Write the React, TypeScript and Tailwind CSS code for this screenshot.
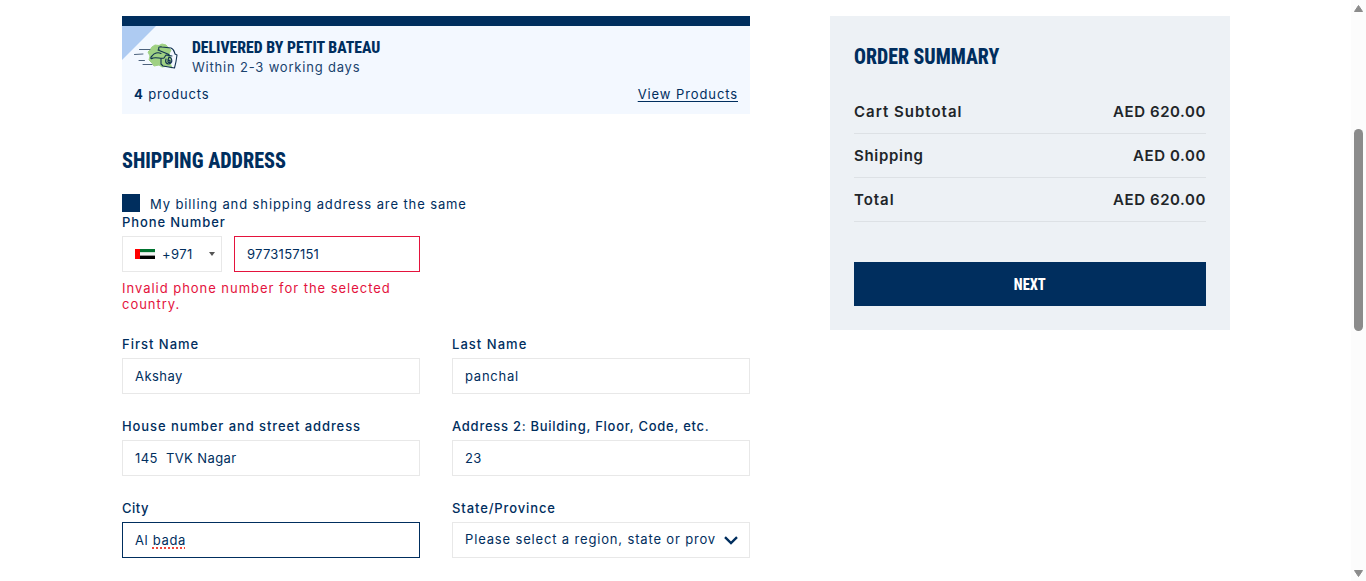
import type { ReactNode } from "react";

function Field({ label, labelClass, className = "border-[#e8e8e8]", children }: { label: string; labelClass: string; className?: string; children: ReactNode }) {
  return (
    <div className="flex h-[82px] flex-col">
      <label className={"block h-[22px] text-[13px] leading-4 font-medium whitespace-nowrap " + labelClass}>{label}</label>
      <div className={"flex h-9 items-center border bg-white pl-3 whitespace-pre " + className}>{children}</div>
    </div>
  );
}

function SummaryRow({ label, value, labelClass, valueClass }: { label: string; value: string; labelClass: string; valueClass: string }) {
  return (
    <div className="flex h-11 items-center justify-between border-b border-[#dde1e5] text-[15px] leading-5 font-semibold text-[#212529]">
      <span className={labelClass}>{label}</span>
      <span className={valueClass}>{value}</span>
    </div>
  );
}

function DeliveryIcon() {
  return (
    <svg width="46" height="30" viewBox="0 0 46 30" fill="none" stroke="#10304f" strokeLinecap="round" strokeLinejoin="round">
      <path d="M19 6 L22 4 L26 4.5 L29 3 L33 4 L35 6.5 L38 9 L36 13 L38 17 L37 22 L39 27 L35 25 L29 26 L26 24 L21 25 L19 22 L16 19 L17 15 L15 11 L17 9Z" fill="#9fd183" stroke="#9fd183" strokeWidth="1" />
      <path d="M6.500 8.500 H17 M1.500 13.500 L10 13 M6 19.500 H11.500 M10 23.500 H19" strokeWidth="1" stroke="#4c627d" />
      <path d="M26 9 C25 6 26 5.500 29 6 L38 7 C41 8 41 10 42 13 L44 14 C43.500 18 43 22 41.500 27 L30 25 L28 23 L28 18 M28 12.500 C25 11 21 12 19 15 C17 17 17.500 18.500 20 17 C24 16 28 18 31 17 L33 14 L39 15 M25 9 L36 13.500" strokeWidth="1.1" />
      <path d="M33 18 C32 21 33 23 36 23 C39 22 39.500 20 38 17 L36 16 L35 19 M35 20 C34.500 22 37.500 22 37 20 C37 19 35.500 19 35 20" strokeWidth="1.2" />
    </svg>
  );
}

export default function App() {
  return (
    <div className="flex h-[581px] w-full overflow-hidden bg-white font-['Inter','Liberation_Sans',sans-serif] text-[13px] leading-4 text-[#002e5e]">
      <main className="flex flex-1 items-start gap-20 pt-4 pl-[122px]">
        <div className="w-[628px]">
          <section className="relative h-[98px] border-t-10 border-[#002e5e] bg-[#f3f8ff] px-3">
            <svg className="absolute top-0 left-0" width="34" height="34" viewBox="0 0 34 34">
              <path d="M0 0H34L0 34Z" fill="#aecbf2" />
            </svg>
            <div className="relative flex h-[59px] pt-[11px]">
              <div className="-ml-px mt-1 w-[59px]">
                <DeliveryIcon />
              </div>
              <div>
                <h2 className="h-5 w-[230px] origin-left scale-x-[0.925] font-['Roboto_Condensed'] text-[17px] leading-5 font-extrabold whitespace-nowrap">DELIVERED BY PETIT BATEAU</h2>
                <p className="h-5 leading-5 tracking-[0.8px] text-[#1a436e]">Within 2-3 working days</p>
              </div>
            </div>
            <div className="relative flex justify-between leading-[18px]">
              <span className="tracking-[0.85px]"><b>4</b> products</span>
              <a className="tracking-[0.9px] underline underline-offset-2">View Products</a>
            </div>
          </section>

          <h1 className="mt-[33px] h-[27px] w-[220px] origin-left scale-x-[0.915] font-['Roboto_Condensed'] text-[22px] leading-7 font-extrabold whitespace-nowrap">SHIPPING ADDRESS</h1>

          <div className="mt-5 flex h-[18px] gap-2.5">
            <span className="h-[18px] w-[18px] bg-[#002e5e]" />
            <span className="mt-px leading-[18px] tracking-[0.89px]">My billing and shipping address are the same</span>
          </div>

          <div className="mb-6 w-[298px]">
            <label className="block h-6 pt-px leading-[18px] font-medium tracking-[0.9px]">Phone Number</label>
            <div className="flex h-9 gap-3">
              <div className="flex w-[100px] items-center border border-[#e8e8e8] pl-3">
                <svg width="20" height="10" viewBox="0 0 20 10">
                  <path d="M0 0H20V3.400H0Z" fill="#00732f" />
                  <path d="M0 3.400H20V6.600H0Z" fill="#f4f4f4" />
                  <path d="M0 6.600H20V10H0Z" fill="#000" />
                  <path d="M0 0H5V10H0Z" fill="#f00" />
                </svg>
                <span className="ml-[7px] w-[47px] tracking-[0.4px]">+971</span>
                <svg width="6" height="4" viewBox="0 0 6 4"><path d="M0 0H6L3 4Z" fill="#555" /></svg>
              </div>
              <div className="flex flex-1 items-center border border-[#e4133d] pl-3 tracking-[0.25px]">9773157151</div>
            </div>
            <p className="mt-2 tracking-[0.97px] text-[#e4133d]">Invalid phone number for the selected country.</p>
          </div>

          <div className="grid grid-cols-[298px_298px] gap-x-8">
            <Field label="First Name" labelClass="tracking-[1px]"><span className="tracking-[0.45px]">Akshay</span></Field>
            <Field label="Last Name" labelClass="tracking-[1.03px]"><span className="tracking-[0.75px]">panchal</span></Field>
            <Field label="House number and street address" labelClass="tracking-[0.91px]"><span className="tracking-[0.4px]">145  TVK Nagar</span></Field>
            <Field label="Address 2: Building, Floor, Code, etc." labelClass="tracking-[0.73px]"><span className="tracking-[0.3px]">23</span></Field>
            <Field label="City" labelClass="tracking-[0.5px]" className="border-[#002e5e]">
              <span className="tracking-[0.65px]">Al <span className="underline decoration-[#f04438] decoration-dotted decoration-2 underline-offset-[2px]">bada</span></span>
            </Field>
            <Field label="State/Province" labelClass="tracking-[0.89px]">
              <span className="-mt-[3px] w-[252px] tracking-[0.84px]">Please select a region, state or prov</span>
              <svg className="ml-[7px]" width="14" height="9" viewBox="0 0 14 9" fill="none"><path d="M1 1.200L7 7L13 1.200" stroke="#002e5e" strokeWidth="2.400" /></svg>
            </Field>
          </div>
        </div>

        <aside className="h-[314px] w-[400px] bg-[#edf1f5] px-6 pt-[26px]">
          <h2 className="h-12 w-[200px] origin-left scale-x-[0.9] pt-px font-['Roboto_Condensed'] text-[22px] leading-7 font-extrabold whitespace-nowrap">ORDER SUMMARY</h2>
          <SummaryRow label="Cart Subtotal" value="AED 620.00" labelClass="tracking-[1px]" valueClass="tracking-[0.57px]" />
          <SummaryRow label="Shipping" value="AED 0.00" labelClass="tracking-[0.7px]" valueClass="tracking-[0.6px]" />
          <SummaryRow label="Total" value="AED 620.00" labelClass="tracking-[0.95px]" valueClass="tracking-[0.57px]" />
          <button className="mt-10 flex h-11 w-full items-center justify-center bg-[#002e5e] text-white">
            <span className="scale-x-[0.85] font-['Roboto_Condensed'] text-[17px] leading-6 font-extrabold">NEXT</span>
          </button>
        </aside>
      </main>

      <div className="flex w-[15px] flex-col items-center bg-[#fcfcfc]">
        <svg className="mt-[5px]" width="9" height="7" viewBox="0 0 9 7"><path d="M4.500 .5L8.500 6.500H.5Z" fill="#8b8b8b" stroke="#8b8b8b" strokeLinejoin="round" /></svg>
        <div className="mt-[117px] h-[202px] w-[9px] rounded-full bg-[#8b8b8b]" />
        <svg className="mt-auto mb-1" width="9" height="7" viewBox="0 0 9 7"><path d="M4.500 6.500L8.500 .5H.5Z" fill="#8b8b8b" stroke="#8b8b8b" strokeLinejoin="round" /></svg>
      </div>
    </div>
  );
}
